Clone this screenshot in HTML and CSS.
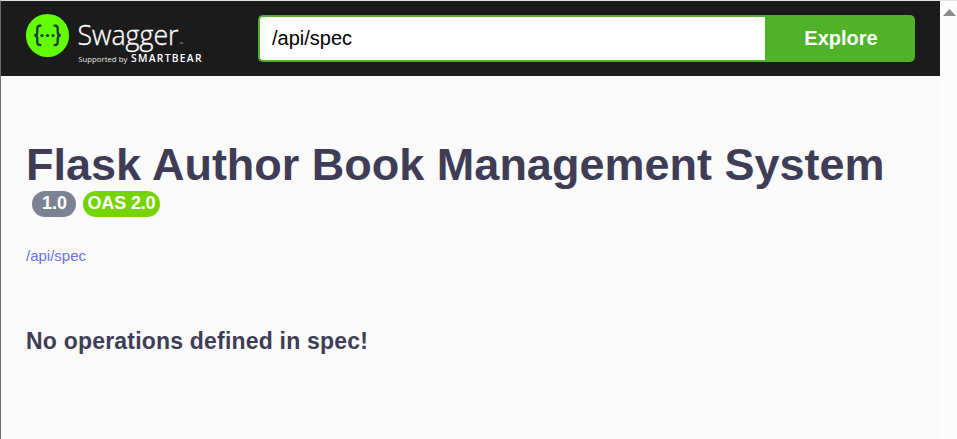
FILE: index.html
```html
<!DOCTYPE html>
<html lang="en">
<head>
<meta charset="utf-8">
<title>Swagger UI</title>
<link rel="stylesheet" href="styles.css">
</head>
<body>
<div class="window">
  <div class="page">
    <header class="topbar">
      <a class="logo">
        <svg width="180" height="56" viewBox="0 0 180 56" role="img">
          <circle cx="21.5" cy="26.5" r="21.6" fill="#62ff00"/>
          <g fill="none" stroke="#173647" stroke-width="2.3">
            <path d="M15.3 16.7h-1.2q-2.8 0-2.8 2.8v3.6q0 3.3-3 3.3q3 0 3 3.3v3.6q0 2.8 2.8 2.8h1.2"/>
            <path d="M27.7 16.7h1.2q2.8 0 2.8 2.8v3.6q0 3.3 3 3.3q-3 0-3 3.3v3.6q0 2.8-2.8 2.8h-1.2"/>
          </g>
          <g fill="#173647"><circle cx="16" cy="26.5" r="1.6"/><circle cx="21.5" cy="26.5" r="1.6"/><circle cx="27" cy="26.5" r="1.6"/></g>
          <text class="brand" x="51.5" y="35.6" textLength="101" lengthAdjust="spacingAndGlyphs">Swagger</text>
          <text class="tm" x="153.5" y="37">™</text>
          <text class="support" x="52.3" y="53" textLength="49" lengthAdjust="spacingAndGlyphs">Supported by</text>
          <text class="company" x="105" y="53" textLength="70.5">SMARTBEAR</text>
        </svg>
      </a>
      <form class="search">
        <input class="url" type="text" value="/api/spec">
        <button class="explore" type="button">Explore</button>
      </form>
    </header>
    <main class="info">
      <h1 class="title">Flask Author Book Management System</h1>
      <div class="badges"><span class="badge version">1.0</span><span class="badge oas">OAS 2.0</span></div>
      <a class="link">/api/spec</a>
      <h3 class="empty">No operations defined in spec!</h3>
    </main>
  </div>
  <div class="scrollbar"><svg width="13" height="7" viewBox="0 0 13 7"><path d="M0 7L6.5 0L13 7z" fill="#8b8b8b"/></svg></div>
</div>
</body>
</html>
```

FILE: styles.css
```css
* { box-sizing: border-box; }
body {
  margin: 0;
  overflow: hidden;
  font-family: "Liberation Sans", Arial, sans-serif;
  color: #3b4151;
}
.window {
  display: flex;
  height: 439px;
  border-top: 1px solid #dfe3e3;
  border-left: 1px solid #6c6c6e;
  background: #fafafa;
}
.page { width: 939px; }
.scrollbar {
  flex: 1;
  padding: 8px 0 0 3px;
  background: #fcfcfc;
}
.scrollbar svg { display: block; }
.topbar {
  display: flex;
  height: 75px;
  padding: 8px 25px 0;
  background: #1b1b1b;
}
.logo { width: 232px; }
.logo svg { display: block; }
.brand { font: 300 28px "Open Sans", sans-serif; fill: #fff; stroke: #fff; stroke-width: .35px; }
.tm { font: 5px "Open Sans", sans-serif; fill: #aaa; }
.support { font: 7.8px "Open Sans", sans-serif; fill: #e8e8e8; }
.company { font: 600 10.3px "Open Sans", sans-serif; fill: #fff; }
.search {
  display: flex;
  flex: 1;
  height: 47px;
  margin-top: 6px;
}
.url {
  width: 507px;
  padding: 0 12px;
  border: 2px solid #4fb229;
  border-right: 0;
  border-radius: 5px 0 0 5px;
  outline: 0;
  background: #fff;
  color: #000;
  font: 20px "Liberation Sans", Arial, sans-serif;
}
.explore {
  flex: 1;
  padding: 0 0 0 2px;
  border: 0;
  border-radius: 0 5px 5px 0;
  background: #4fb229;
  color: #fff;
  font: bold 20px "Liberation Sans", Arial, sans-serif;
}
.info { padding: 62px 25px 0; }
.title {
  margin: 0;
  color: #3f3d56;
  font-size: 45px;
  line-height: 53px;
  white-space: nowrap;
}
.badges { display: flex; gap: 7px; padding-left: 6px; }
.badge {
  height: 26px;
  border-radius: 13px;
  color: #fff;
  font-size: 18px;
  font-weight: bold;
  line-height: 24px;
  text-align: center;
}
.version { width: 44px; padding-left: 1px; background: #7d8293; }
.oas { width: 77px; background: #75d400; letter-spacing: -.15px; }
.link {
  display: block;
  margin-top: 30px;
  color: #6b70e6;
  font-size: 15px;
  line-height: 18px;
}
.empty {
  margin: 62px 0 0;
  color: #3f3d56;
  font-size: 23px;
  letter-spacing: .2px;
  line-height: 28px;
}
```
